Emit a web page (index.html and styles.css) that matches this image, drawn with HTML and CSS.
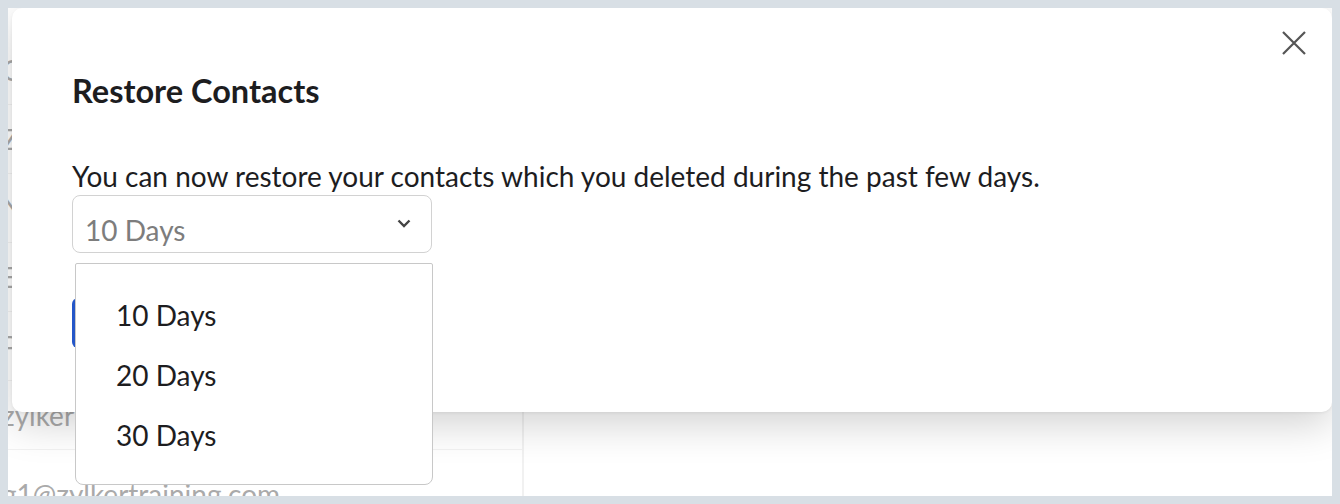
FILE: index.html
```html
<!DOCTYPE html>
<html lang="en">
<head>
  <meta charset="UTF-8">
  <title>Restore Contacts</title>
  <link rel="stylesheet" href="styles.css">
</head>
<body>

  <div class="page">
    <!-- contact list behind the dialog -->
    <div class="list">
      <div class="list-col">
        <div class="row">Contacts</div>
        <div class="row">Zylker</div>
        <div class="row">Name</div>
        <div class="row">Email</div>
        <div class="row">Phone</div>
        <div class="row">zylker</div>
        <div class="row row-last">g1@zylkertraining.com</div>
      </div>
      <div class="list-rest"></div>
    </div>

    <div class="modal">
      <button class="close" aria-label="Close">
        <svg width="26" height="26" viewBox="0 0 26 26">
          <path d="M2 2 L24 24 M24 2 L2 24" stroke="#555" stroke-width="2.2" fill="none"/>
        </svg>
      </button>

      <h2 class="title">Restore Contacts</h2>
      <p class="desc">You can now restore your contacts which you deleted during the past few days.</p>

      <div class="select">
        <span>10 Days</span>
        <svg width="14" height="9" viewBox="0 0 14 9">
          <path d="M1.5 1.5 L7 7 L12.5 1.5" stroke="#444" stroke-width="2.4" fill="none"/>
        </svg>
      </div>

      <button class="restore">Restore</button>
    </div>

    <ul class="menu">
      <li>10 Days</li>
      <li>20 Days</li>
      <li>30 Days</li>
    </ul>
  </div>

</body>
</html>
```

FILE: styles.css
```css
body {
  margin: 0;
  padding: 8px;
  background: #d8dfe5;
  font-family: 'Lato', 'Noto Sans', sans-serif;
  color: #1d1d1f;
}

.page {
  position: relative;
  height: 488px;
  background: #fff;
  overflow: hidden;
}

/* background list */
.list {
  display: flex;
  height: 100%;
}

.list-col {
  width: 520px;
  border-right: 2px solid #f1f1f1;
  margin-left: -6px;
  padding-top: 28px;
}

.row {
  height: 68px;
  line-height: 68px;
  font-size: 28px;
  color: #aaa;
  border-bottom: 1px solid #f2f2f2;
  white-space: nowrap;
}

.row-last {
  border-bottom: none;
  padding-top: 10px;
}

.list-rest {
  flex: 1;
}

/* dialog */
.modal {
  position: absolute;
  left: 4px;
  top: 0;
  width: 1320px;
  height: 404px;
  box-sizing: border-box;
  padding: 63px 60px 0;
  background: #fff;
  border-radius: 10px;
  box-shadow: 0 12px 40px rgba(0, 0, 0, 0.18), 0 1px 3px rgba(0, 0, 0, 0.06);
}

.close {
  position: absolute;
  top: 22px;
  right: 25px;
  padding: 0;
  border: none;
  background: none;
  cursor: pointer;
}

.title {
  margin: 0;
  font-size: 32.5px;
  line-height: 40px;
  font-weight: 700;
  color: #1d1d1f;
}

.desc {
  margin: 48px 0 0;
  font-size: 28px;
  line-height: 34px;
  color: #1d1d1f;
}

.select {
  display: flex;
  align-items: center;
  justify-content: space-between;
  width: 360px;
  height: 58px;
  box-sizing: border-box;
  margin-top: 2px;
  padding: 11px 20px 0 12px;
  border: 1px solid #d2d2d2;
  border-radius: 8px;
  font-size: 28px;
  color: #7d7d7d;
}

.select svg {
  margin-top: -13px;
}

.restore {
  display: block;
  margin-top: 45px;
  height: 50px;
  padding: 0 30px;
  border: none;
  border-radius: 6px;
  background: #2456c8;
  color: #fff;
  font-family: inherit;
  font-size: 22px;
}

/* open dropdown */
.menu {
  position: absolute;
  left: 67px;
  top: 255px;
  width: 358px;
  height: 222px;
  box-sizing: border-box;
  margin: 0;
  padding: 21px 0 0;
  list-style: none;
  background: #fff;
  border: 1px solid #c8c8c8;
  border-radius: 2px 2px 8px 8px;
}

.menu li {
  height: 60px;
  line-height: 60px;
  padding-left: 40px;
  font-size: 28px;
  color: #1d1d1f;
}
```
